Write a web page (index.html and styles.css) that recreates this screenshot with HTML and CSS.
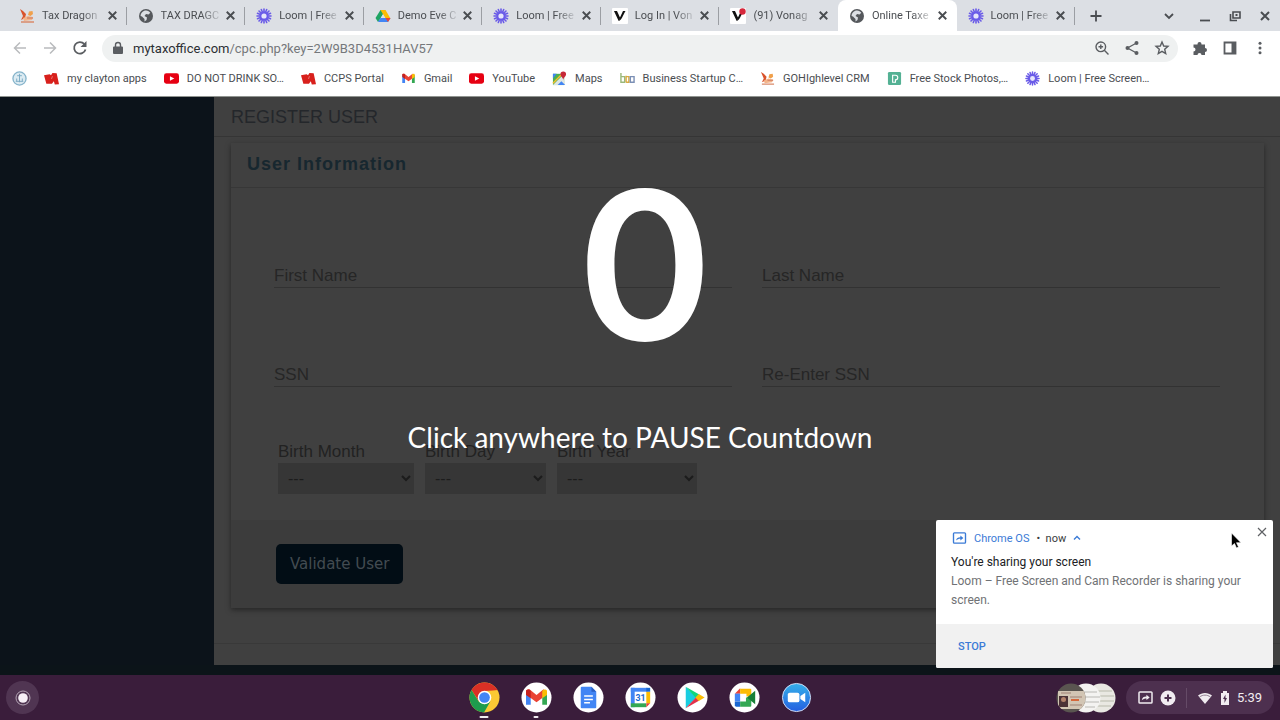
FILE: index.html
```html
<!DOCTYPE html>
<html lang="en">
<head>
    <meta charset="UTF-8">
    <meta name="viewport" content="width=device-width, initial-scale=1.0">
    <title>Online Taxes</title>
    <link rel="stylesheet" href="styles.css">
</head>
<body>
    <!-- shared icons -->
    <svg class="sprite" aria-hidden="true">
        <symbol id="i-close" viewBox="0 0 16 16"><path d="M4 4l8 8M12 4l-8 8" stroke="currentColor" stroke-width="2" fill="none"/></symbol>
        <symbol id="i-dragon" viewBox="0 0 16 16">
            <path d="M1 1l3 2 3 3-1 4-4 2 2-4z" fill="#d9532c"/>
            <path d="M10 3.500l3.500-.5.500 3-2.500 2-2.500-1z" fill="#f0a04b"/>
            <path d="M4 10l5-2 5 1-1 3-8 1z" fill="#f3b48a"/>
            <path d="M2 14h13M8 10h6" stroke="#d98a6a" stroke-width="1.4"/>
        </symbol>
        <symbol id="i-globe" viewBox="0 0 16 16">
            <circle cx="8" cy="8" r="7" fill="#55585c"/>
            <path d="M8 2.500c2 0 3.500 1 4.300 2.300L10.500 6.500 8 6 6.500 8 9 9.500 8.500 12l-2 1.500V11L4 8.500 2.600 8C2.600 5 5 2.500 8 2.500z" fill="#dcdfe4"/>
        </symbol>
        <symbol id="i-loom" viewBox="0 0 16 16">
            <g stroke="#6a5be8" stroke-width="1.600" stroke-linecap="round">
                <path d="M8 1v14M1 8h14M3 3l10 10M13 3L3 13M5.300 1.500l5.400 13M10.700 1.500l-5.400 13M1.500 5.300l13 5.400M1.500 10.700l13-5.400"/>
            </g>
            <circle cx="8" cy="8" r="4.500" fill="#6a5be8"/>
            <circle cx="8" cy="8" r="2.600" fill="#e6e5fb"/>
        </symbol>
        <symbol id="i-drive" viewBox="0 0 16 16">
            <path d="M5.500 2h5L5.500 10.500 3 14 .5 10z" fill="#1fa463"/>
            <path d="M5.500 2h5l5 8.500h-5z" fill="#fbbc05"/>
            <path d="M5.500 10h10L13 14H3z" fill="#4285f4"/>
            <path d="M8 6.200L10.300 10H5.700z" fill="#dcdfe4"/>
            <path d="M10.500 10h5L13 14z" fill="#ea4335"/>
        </symbol>
        <symbol id="i-vonage" viewBox="0 0 16 16">
            <rect width="16" height="16" rx="1" fill="#fff"/>
            <path d="M2 3h3l3.200 7L6.700 13z" fill="#111"/>
            <path d="M6.700 13c3-1 4-5 6.800-10H11L7.500 10.500z" fill="#111"/>
        </symbol>
        <symbol id="i-adobe" viewBox="0 0 16 16">
            <path d="M0 4.500l6-1 1.500 1L9 2l4.500.5L16 14l-4.500.5-1-3.500-2 2.500H2.500z" fill="#d8201c"/>
            <path d="M9 5.500l-1 3" stroke="#f0a09e" stroke-width=".7"/>
        </symbol>
        <symbol id="i-youtube" viewBox="0 0 16 16">
            <rect x="0" y="2.500" width="16" height="11" rx="2.500" fill="#e60012"/>
            <path d="M6.300 5.500v5L11 8z" fill="#fff"/>
        </symbol>
        <symbol id="i-gmail" viewBox="0 0 24 24">
            <path d="M2 6v13h4.500V9.500z" fill="#4285f4"/>
            <path d="M22 6v13h-4.500V9.500z" fill="#34a853"/>
            <path d="M2 5l3-1 7 5.500L19 4l-1.500 8.500L12 16.500 6.500 12.500z" fill="#ea4335"/>
            <path d="M2 6v3.500l4.500 3.200V5.500C4 3.500 2 4.300 2 6z" fill="#c5221f"/>
            <path d="M17.500 5.500v7.200L22 9.500V6c0-1.700-2-2.500-4.500-.5z" fill="#fbbc04"/>
        </symbol>
        <symbol id="i-cast" viewBox="0 0 16 14">
            <rect x="1" y="1" width="14" height="12" rx="1" fill="none" stroke="currentColor" stroke-width="1.600"/>
            <path d="M4 10c.5-3 2-4 5-4V4l3.500 3L9 9.800V8C7 8 5.500 8.500 4 10z" fill="currentColor"/>
        </symbol>
    </svg>

    <header class="browser">
        <div class="tab-strip">
            <div class="tabs">
                <div class="tab"><svg class="fav"><use href="#i-dragon"/></svg><span>Tax Dragon</span><button aria-label="Close tab"><svg><use href="#i-close"/></svg></button></div>
                <div class="tab"><svg class="fav"><use href="#i-globe"/></svg><span>TAX DRAGC</span><button aria-label="Close tab"><svg><use href="#i-close"/></svg></button></div>
                <div class="tab"><svg class="fav"><use href="#i-loom"/></svg><span>Loom | Free</span><button aria-label="Close tab"><svg><use href="#i-close"/></svg></button></div>
                <div class="tab"><svg class="fav"><use href="#i-drive"/></svg><span>Demo Eve C</span><button aria-label="Close tab"><svg><use href="#i-close"/></svg></button></div>
                <div class="tab"><svg class="fav"><use href="#i-loom"/></svg><span>Loom | Free</span><button aria-label="Close tab"><svg><use href="#i-close"/></svg></button></div>
                <div class="tab"><svg class="fav"><use href="#i-vonage"/></svg><span>Log In | Von</span><button aria-label="Close tab"><svg><use href="#i-close"/></svg></button></div>
                <div class="tab before-active"><svg class="fav" viewBox="0 0 16 16"><use href="#i-vonage"/><circle cx="12.500" cy="3.500" r="3.200" fill="#d6283c"/></svg><span>(91) Vonag</span><button aria-label="Close tab"><svg><use href="#i-close"/></svg></button></div>
                <div class="tab active"><svg class="fav"><use href="#i-globe"/></svg><span>Online Taxe</span><button aria-label="Close tab"><svg><use href="#i-close"/></svg></button></div>
                <div class="tab"><svg class="fav"><use href="#i-loom"/></svg><span>Loom | Free</span><button aria-label="Close tab"><svg><use href="#i-close"/></svg></button></div>
            </div>
            <button class="new-tab" aria-label="New tab"><svg viewBox="0 0 16 16"><path d="M8 2.500v11M2.500 8h11" stroke="currentColor" stroke-width="1.800"/></svg></button>
            <div class="window-controls">
                <button aria-label="Search tabs"><svg viewBox="0 0 16 16"><path d="M4 6l4 4 4-4" fill="none" stroke="currentColor" stroke-width="1.800"/></svg></button>
                <button aria-label="Minimize"><svg viewBox="0 0 16 16"><path d="M3 12.500h10" stroke="currentColor" stroke-width="1.800"/></svg></button>
                <button aria-label="Restore"><svg viewBox="0 0 16 16"><path d="M6 4h7v6H6zM3.500 6v6.500H10" fill="none" stroke="currentColor" stroke-width="1.600"/><path d="M8.500 6h2v2h-2z" fill="currentColor"/></svg></button>
                <button aria-label="Close window"><svg><use href="#i-close"/></svg></button>
            </div>
        </div>

        <div class="toolbar">
            <button class="muted" aria-label="Back"><svg viewBox="0 0 16 16"><path d="M14 8H3M8 2.500L2.500 8 8 13.500" fill="none" stroke="currentColor" stroke-width="1.500"/></svg></button>
            <button class="muted" aria-label="Forward"><svg viewBox="0 0 16 16"><path d="M2 8h11M8 2.500L13.500 8 8 13.500" fill="none" stroke="currentColor" stroke-width="1.500"/></svg></button>
            <button aria-label="Reload"><svg viewBox="0 0 16 16"><path d="M13.500 9.500A5.800 5.800 0 1 1 12.300 4" fill="none" stroke="currentColor" stroke-width="1.800"/><path d="M14.500 1v6h-6z" fill="currentColor"/></svg></button>
            <div class="omnibox">
                <svg class="lock" viewBox="0 0 12 16"><path d="M2 6.500h8a1 1 0 0 1 1 1V13a1 1 0 0 1-1 1H2a1 1 0 0 1-1-1V7.500a1 1 0 0 1 1-1z" fill="#5a5d61"/><path d="M3.500 7V5a2.500 2.500 0 0 1 5 0v2" fill="none" stroke="#5a5d61" stroke-width="1.400"/></svg>
                <p class="url"><b>mytaxoffice.com</b>/cpc.php?key=2W9B3D4531HAV57</p>
                <button aria-label="Zoom"><svg viewBox="0 0 16 16"><circle cx="6.800" cy="6.800" r="4.800" fill="none" stroke="currentColor" stroke-width="1.400"/><path d="M10.300 10.300L14.500 14.500M4.500 6.800h4.600M6.800 4.500v4.600" stroke="currentColor" stroke-width="1.400"/></svg></button>
                <button aria-label="Share"><svg viewBox="0 0 16 16"><path d="M12.500 3L3.500 8l9 5" fill="none" stroke="currentColor" stroke-width="1.300"/><circle cx="12.500" cy="3" r="2" fill="currentColor"/><circle cx="3.500" cy="8" r="2" fill="currentColor"/><circle cx="12.500" cy="13" r="2" fill="currentColor"/></svg></button>
                <button aria-label="Bookmark"><svg viewBox="0 0 16 16"><path d="M8 2l1.700 4 4.300.4-3.300 2.900 1 4.200L8 11.300l-3.700 2.200 1-4.200L2 6.400 6.300 6z" fill="none" stroke="currentColor" stroke-width="1.400"/></svg></button>
            </div>
            <button aria-label="Extensions"><svg viewBox="0 0 16 16"><path d="M1.500 4.500h4V4a2 2 0 1 1 4 0v.500H13V8a2 2 0 1 1 0 4v3H9.500a2 2 0 0 0-4 0h-4v-3.500a2 2 0 0 0 0-4z" fill="currentColor"/></svg></button>
            <button aria-label="Side panel"><svg viewBox="0 0 16 16"><path d="M2.500 2.500h11v11h-11z" fill="none" stroke="currentColor" stroke-width="1.800"/><path d="M9.500 2h4v12h-4z" fill="currentColor"/></svg></button>
            <button aria-label="Menu"><svg viewBox="0 0 16 16"><g fill="currentColor"><circle cx="8" cy="3.300" r="1.500"/><circle cx="8" cy="8" r="1.500"/><circle cx="8" cy="12.700" r="1.500"/></g></svg></button>
        </div>

        <nav class="bookmarks">
            <a href="#" aria-label="Bookmark"><svg viewBox="0 0 16 16"><circle cx="8" cy="8" r="7" fill="#dcebf2" stroke="#86b4cb" stroke-width="1.400"/><path d="M8 3v9M5.500 5h5M4 11h8M5 8v3M11 8v3" stroke="#7aabc4"/></svg></a>
            <a href="#"><svg><use href="#i-adobe"/></svg>my clayton apps</a>
            <a href="#"><svg><use href="#i-youtube"/></svg>DO NOT DRINK SO…</a>
            <a href="#"><svg><use href="#i-adobe"/></svg>CCPS Portal</a>
            <a href="#"><svg><use href="#i-gmail"/></svg>Gmail</a>
            <a href="#"><svg><use href="#i-youtube"/></svg>YouTube</a>
            <a href="#"><svg viewBox="0 0 16 16"><path d="M1 3h12v12H1z" fill="#4caf50"/><path d="M1 15L12 4l2 11z" fill="#dfe6e2"/><path d="M6 15l4-4 4 4z" fill="#4285f4"/><path d="M1 13L11 3" stroke="#fbc02d" stroke-width="1.500"/><path d="M1 3h4L1 8z" fill="#4285f4"/><path d="M12 10c0-3-3-4-3-6.500a3 3 0 0 1 6 0C15 6 12 7 12 10z" fill="#c62838"/></svg>Maps</a>
            <a href="#"><svg viewBox="0 0 16 16" fill="none" stroke-width="1.500"><path d="M1 2v10h4V6H1" stroke="#9ab87a"/><path d="M6.500 5v7M6.500 6h3v6h-3" stroke="#d9a93f"/><path d="M11 6h4v6h-4z" stroke="#7b8fb5"/></svg>Business Startup C…</a>
            <a href="#"><svg><use href="#i-dragon"/></svg>GOHIghlevel CRM</a>
            <a href="#"><svg viewBox="0 0 16 16"><rect x="1" y="1" width="14" height="14" rx="1.500" fill="#54b194"/><path d="M6 12V4.500h3a2.500 2.500 0 0 1 0 5V12z" fill="none" stroke="#fff" stroke-width="1.200"/></svg>Free Stock Photos,…</a>
            <a href="#"><svg><use href="#i-loom"/></svg>Loom | Free Screen…</a>
        </nav>
    </header>

    <div class="page">
        <aside class="sidebar"></aside>
        <main class="content">
            <h1>REGISTER USER</h1>
            <form class="card">
                <h2>User Information</h2>
                <div class="card-body">
                    <div class="fields">
                        <input type="text" placeholder="First Name" aria-label="First Name">
                        <input type="text" placeholder="Last Name" aria-label="Last Name">
                        <input type="text" placeholder="SSN" aria-label="SSN">
                        <input type="text" placeholder="Re-Enter SSN" aria-label="Re-Enter SSN">
                    </div>
                    <div class="birth">
                        <div class="birth-month">
                            <label for="month">Birth Month</label>
                            <select id="month"><option>---</option></select>
                        </div>
                        <div class="birth-day">
                            <label for="day">Birth Day</label>
                            <select id="day"><option>---</option></select>
                        </div>
                        <div class="birth-year">
                            <label for="year">Birth Year</label>
                            <select id="year"><option>---</option></select>
                        </div>
                    </div>
                </div>
                <div class="card-footer">
                    <button type="button">Validate User</button>
                </div>
            </form>
            <div class="page-footer"></div>
        </main>
        <div class="countdown">
            <div class="number">0</div>
            <p>Click anywhere to PAUSE Countdown</p>
        </div>
    </div>

    <footer class="shelf">
        <button class="launcher" aria-label="Launcher"><svg viewBox="0 0 16 16"><circle cx="8" cy="8" r="7" fill="none" stroke="#b3a4b4"/><circle cx="8" cy="8" r="4.800" fill="#f6eff6"/></svg></button>
        <div class="apps">
            <button class="running focused" aria-label="Chrome"><svg viewBox="0 0 32 32">
                <circle cx="16" cy="16" r="15.500" fill="#fbc934"/>
                <path d="M2.600 8.200A15.500 15.500 0 0 1 29.400 8.200L16 9z" fill="#d93025"/>
                <path d="M2.600 8.200L29.400 8.200 16 9 10 19.500z" fill="#d93025"/>
                <path d="M2.600 8.200A15.500 15.500 0 0 0 15.500 31.500L22 20 16 23 10 20z" fill="#1e9c4d"/>
                <circle cx="16" cy="16" r="7" fill="#fff"/><circle cx="16" cy="16" r="5.500" fill="#4285f4"/></svg></button>
            <button class="running" aria-label="Gmail"><svg viewBox="0 0 32 32"><circle cx="16" cy="16" r="15.500" fill="#fff"/><use href="#i-gmail" x="3" y="3" width="26" height="26"/></svg></button>
            <button aria-label="Docs"><svg viewBox="0 0 32 32"><circle cx="16" cy="16" r="15.500" fill="#fff"/><path d="M9 5h10l5 5v16a1 1 0 0 1-1 1H9a1 1 0 0 1-1-1V6a1 1 0 0 1 1-1z" fill="#4285f4"/><path d="M19 5l5 5h-5z" fill="#2a5fc4"/><path d="M11.500 14.500h9M11.500 18h9M11.500 21.500h6" stroke="#fff" stroke-width="1.500"/></svg></button>
            <button aria-label="Calendar"><svg viewBox="0 0 32 32"><circle cx="16" cy="16" r="15.500" fill="#fff"/><path d="M6 6h17v4H6z" fill="#4285f4"/><path d="M6 6h4v20H6z" fill="#4285f4"/><path d="M22 10h4v12h-4z" fill="#fbbc04"/><path d="M6 22h16v4H6z" fill="#34a853"/><path d="M22 22h4l-4 4z" fill="#ea4335"/><path d="M22 6h4v4h-4z" fill="#1967d2"/><text x="16" y="19.500" class="cal-day">31</text></svg></button>
            <button aria-label="Play Store"><svg viewBox="0 0 32 32"><circle cx="16" cy="16" r="15.500" fill="#fff"/><path d="M9 5v22l11-11z" fill="#19cde0"/><path d="M9 5l14 8-3.500 3.500z" fill="#10d67c"/><path d="M9 27l14-8-3.500-3z" fill="#e2324a"/><path d="M22.500 12.500l6 3.500-6 3.500L19 16z" fill="#fbbc04"/></svg></button>
            <button aria-label="Meet"><svg viewBox="0 0 32 32"><circle cx="16" cy="16" r="15.500" fill="#fff"/><path d="M6 12l5.500-5.500V12z" fill="#ea4335"/><path d="M11.500 7H22a1 1 0 0 1 1 1v7h-5v-3h-6.500z" fill="#fbbc04"/><path d="M6 12h5.500v8H6z" fill="#4285f4"/><path d="M6 20h5.500v5.500H7.500A1.500 1.500 0 0 1 6 24z" fill="#1967d2"/><path d="M11.500 20h6v-4h5.500v8.500a1 1 0 0 1-1 1H11.500z" fill="#34a853"/><path d="M18.500 16l8.500-7v14z" fill="#188038"/></svg></button>
            <button aria-label="Zoom"><svg viewBox="0 0 32 32"><defs><linearGradient id="zoom-bg" x2="0" y2="1"><stop stop-color="#36b1ea"/><stop offset="1" stop-color="#245fe0"/></linearGradient></defs><circle cx="16" cy="16" r="14.500" fill="url(#zoom-bg)" stroke="#d5def5"/><rect x="7" y="11" width="12" height="10" rx="2" fill="#fff"/><path d="M20 14.500l5-3.500v10l-5-3.500z" fill="#fff"/></svg></button>
        </div>
        <div class="tray">
            <button class="holding" aria-label="Recent files"><svg viewBox="0 0 60 30">
                <circle cx="45" cy="15" r="14.500" fill="#e9e8e2"/>
                <path d="M34 8h22M32 13h26M32 18h26M35 23h20" stroke="#b8b9ab"/>
                <circle cx="30" cy="15" r="14.500" fill="#f4f3f1"/>
                <path d="M28 9h13M29 14h15M29 19h14M29 24h10" stroke="#b9b8b4"/>
                <clipPath id="card-clip"><circle cx="15" cy="15" r="14.500"/></clipPath>
                <g clip-path="url(#card-clip)"><path d="M0 0h30v30H0z" fill="#5a5550"/><path d="M2 8h28v18H2z" fill="#d2c5b4"/><path d="M3 13h9v11H3z" fill="#4b3237"/><circle cx="7.500" cy="16.500" r="2.500" fill="#b2826c"/><path d="M5 10h10M14 14h12M14 22h12" stroke="#9f8074"/><path d="M15 17h8" stroke="#d5683c" stroke-width="2"/></g>
            </svg></button>
            <button class="status" aria-label="Status, 5:39">
                <svg class="st-cast"><use href="#i-cast"/></svg>
                <svg viewBox="0 0 16 16"><circle cx="8" cy="8" r="7.500" fill="#f1ecf1"/><path d="M8 4.500v7M4.500 8h7" stroke="#4d304f" stroke-width="2"/></svg>
                <i></i>
                <svg viewBox="0 0 16 16"><path d="M1 5.500C5 2 11 2 15 5.500L8 14z" fill="currentColor"/><path d="M2.500 7C6 4.500 10 4.500 13.500 7" stroke="#8f7d90" fill="none" stroke-width="1"/></svg>
                <svg class="st-battery" viewBox="0 0 10 16"><path d="M3 1h4v2h2v12H1V3h2z" fill="currentColor"/><path d="M5.500 4.500L3 9h1.500v4L7 8H5.500z" fill="#4d304f"/></svg>
                <span>5:39</span>
            </button>
        </div>
    </footer>

    <section class="notification">
        <div class="note-body">
            <div class="note-head">
                <svg><use href="#i-cast"/></svg>
                <span>Chrome OS</span>
                <span class="when">• &nbsp;now</span>
                <svg class="caret" viewBox="0 0 8 8"><path d="M1 5.500L4 2.500l3 3" fill="none" stroke="currentColor" stroke-width="1.400"/></svg>
            </div>
            <h3>You're sharing your screen</h3>
            <p>Loom – Free Screen and Cam Recorder is sharing your screen.</p>
        </div>
        <div class="note-actions"><button>STOP</button></div>
        <button class="note-close" aria-label="Dismiss"><svg viewBox="0 0 16 16"><path d="M4 4l8 8M12 4l-8 8" stroke="currentColor" stroke-width="1.200"/></svg></button>
        <svg class="pointer" viewBox="0 0 12 18"><path d="M1.500 1v13l3-2.500 2 4.500 2-1-2-4.300H11z" fill="#000" stroke="#fff" stroke-width=".6"/></svg>
    </section>
</body>
</html>
```

FILE: styles.css
```css
* {
    box-sizing: border-box;
}

body {
    margin: 0;
    min-height: 100vh;
    display: flex;
    flex-direction: column;
    background: #0c1419;
    font-family: Roboto, sans-serif;
    font-size: 11px;
}

h1, h2, h3, p {
    margin: 0;
}

button {
    padding: 0;
    border: none;
    background: none;
    color: inherit;
    font: inherit;
    cursor: pointer;
}

svg {
    display: block;
    width: 16px;
    height: 16px;
    flex: none;
}

.sprite {
    position: absolute;
    width: 0;
    height: 0;
}

/* Browser */
.browser {
    background: #fff;
    color: #4a4d51;
    border-bottom: 1px solid #909490;
}

.tab-strip {
    display: flex;
    align-items: center;
    height: 31px;
    padding: 0 7px 0 8px;
    background: #dcdfe4;
}

.tabs {
    display: flex;
    flex: 1;
    max-width: 1067px;
    align-self: stretch;
}

.tab {
    display: flex;
    flex: 1;
    align-items: center;
    min-width: 0;
    padding: 0 7px 0 11px;
    background: linear-gradient(#9b9ea3, #9b9ea3) right center / 1px 18px no-repeat #dcdfe4;
}

.tab span {
    flex: 1;
    min-width: 0;
    margin: 0 2px 0 7px;
    overflow: hidden;
    white-space: nowrap;
    -webkit-mask-image: linear-gradient(to right, #000 40px, transparent 62px);
    mask-image: linear-gradient(to right, #000 40px, transparent 62px);
}

.tab button svg {
    width: 15px;
    height: 15px;
}

.tab.active {
    background: #fff;
    border-radius: 8px 8px 0 0;
}

.tab.before-active {
    background: #dcdfe4;
}

.new-tab {
    margin-left: 13px;
}

.window-controls {
    display: flex;
    gap: 14px;
    margin-left: auto;
}

.window-controls button:first-child {
    margin-right: 6px;
}

.toolbar {
    display: flex;
    align-items: center;
    gap: 14px;
    height: 34px;
    padding: 0 12px;
}

.toolbar button {
    color: #5a5d61;
}

.toolbar .muted {
    color: #b9bbbd;
}

.omnibox {
    display: flex;
    flex: 1;
    align-items: center;
    gap: 14px;
    height: 27px;
    padding: 0 8px 0 10px;
    border-radius: 14px;
    background: #eff1f1;
}

.lock {
    width: 12px;
}

.url {
    flex: 1;
    margin-left: -5px;
    font-size: 13px;
    color: #75787b;
}

.url b {
    font-weight: 400;
    color: #2c2f33;
}

.bookmarks {
    display: flex;
    align-items: center;
    gap: 17px;
    height: 31px;
    padding: 0 12px 4px;
    white-space: nowrap;
}

.bookmarks a {
    display: flex;
    align-items: center;
    gap: 8px;
    color: #4a4d51;
    text-decoration: none;
}

.bookmarks svg {
    width: 15px;
    height: 15px;
}

/* Register page, dimmed while the countdown runs */
.page {
    position: relative;
    display: flex;
    flex: 1;
    padding-bottom: 10px;
    font-family: "Liberation Sans", Arial, sans-serif;
}

.sidebar {
    width: 214px;
    flex: none;
    background: #0c131a;
}

.content {
    display: flex;
    flex: 1;
    flex-direction: column;
    background: #404040;
}

h1 {
    height: 40px;
    padding-left: 17px;
    border-bottom: 1px solid #353535;
    font-size: 18px;
    font-weight: 400;
    line-height: 40px;
    color: #24272b;
}

.card {
    margin: 6px 16px 0 17px;
    background: #404040;
    box-shadow: 0 2px 5px #262626;
}

h2 {
    height: 45px;
    padding-left: 16px;
    border-bottom: 1px solid #373737;
    font-size: 18px;
    letter-spacing: 1px;
    line-height: 42px;
    color: #17272f;
}

.card-body {
    padding: 70px 44px 26px 43px;
}

.fields {
    display: grid;
    grid-template-columns: 1fr 1fr;
    gap: 69px 30px;
}

.fields input {
    min-width: 0;
    height: 30px;
    padding: 6px 0 0;
    border: none;
    border-bottom: 1px solid #323232;
    background: none;
    font: 17px "Liberation Sans", Arial, sans-serif;
    color: #262626;
}

.fields input::placeholder {
    color: #262626;
}

.birth {
    display: flex;
    gap: 11px;
    margin: 54px 0 0 4px;
}

.birth label {
    display: block;
    font-size: 17px;
    line-height: 22px;
    color: #222;
}

.birth select {
    width: 100%;
    height: 31px;
    padding: 0 6px;
    border: none;
    background: #363636;
    font: 16px "Liberation Sans", Arial, sans-serif;
    color: #1c1c1c;
}

.birth-month {
    width: 136px;
}

.birth-day {
    width: 121px;
}

.birth-year {
    width: 140px;
}

.card-footer {
    padding: 24px 45px;
    background: #3c3c3c;
}

.card-footer button {
    height: 40px;
    padding: 0 14px;
    border-radius: 5px;
    background: #020d15;
    font: 15px "DejaVu Sans", sans-serif;
    color: #424b51;
}

.page-footer {
    height: 22px;
    margin-top: auto;
    border-top: 1px solid #393939;
}

.countdown {
    position: absolute;
    inset: 0;
    display: flex;
    flex-direction: column;
    align-items: center;
    padding-top: 68px;
    color: #fff;
    cursor: pointer;
}

.number {
    padding-left: 10px;
    font-family: Inter, sans-serif;
    font-size: 206px;
    font-weight: 600;
    line-height: 200px;
}

.countdown p {
    margin-top: 52px;
    font-family: Lato, sans-serif;
    font-size: 28px;
    line-height: 40px;
}

/* Shelf */
.shelf {
    display: grid;
    grid-template-columns: 1fr auto 1fr;
    align-items: center;
    height: 45px;
    padding: 0 6px;
    background: #3a1d3b;
}

.launcher {
    display: grid;
    place-items: center;
    width: 33px;
    height: 33px;
    border-radius: 50%;
    background: #503552;
}

.apps {
    display: flex;
    gap: 21px;
}

.apps button {
    position: relative;
}

.apps svg {
    width: 31px;
    height: 31px;
}

.running::after {
    content: "";
    position: absolute;
    bottom: -5px;
    left: 50%;
    width: 5px;
    height: 2px;
    border-radius: 1px;
    background: #f1ecf1;
    transform: translateX(-50%);
}

.focused::after {
    width: 9px;
}

.cal-day {
    font-size: 9px;
    font-weight: 700;
    text-anchor: middle;
    fill: #1967d2;
}

.tray {
    display: flex;
    align-items: center;
    justify-content: flex-end;
    gap: 10px;
}

.holding svg {
    width: 60px;
    height: 30px;
}

.status {
    display: flex;
    align-items: center;
    gap: 7px;
    height: 33px;
    padding: 0 12px;
    border-radius: 17px;
    background: #4d304f;
    color: #f1ecf1;
    font-size: 13px;
}

.status i {
    width: 1px;
    height: 20px;
    margin: 0 3px;
    background: #654b67;
}

.st-cast {
    width: 15px;
    height: 13px;
}

.status .st-battery {
    width: 10px;
}

/* Notification */
.notification {
    position: fixed;
    right: 7px;
    bottom: 52px;
    width: 337px;
    border-radius: 2px;
    overflow: hidden;
    background: #fff;
    font-size: 12px;
}

.note-body {
    padding: 10px 30px 14px 15px;
}

.note-head {
    display: flex;
    align-items: center;
    gap: 7px;
    height: 16px;
    margin-bottom: 7px;
    font-size: 11px;
    color: #3b7bd6;
}

.note-head svg {
    width: 15px;
    height: 12px;
    margin-left: 1px;
}

.note-head .caret {
    width: 8px;
    height: 8px;
    margin: 0;
}

.when {
    color: #3a3c40;
}

.note-body h3 {
    font-size: 12px;
    font-weight: 400;
    line-height: 19px;
    color: #202124;
}

.note-body p {
    line-height: 19px;
    color: #707275;
}

.note-actions {
    padding: 12px 15px 12px;
    background: #f1f1f1;
}

.note-actions button {
    height: 20px;
    padding: 0 7px;
    font-size: 11px;
    font-weight: 500;
    color: #3b7bd6;
}

.note-close {
    position: absolute;
    top: 4px;
    right: 3px;
    color: #5f6165;
}

.pointer {
    position: absolute;
    top: 12px;
    right: 31px;
    width: 12px;
    height: 18px;
}
```
